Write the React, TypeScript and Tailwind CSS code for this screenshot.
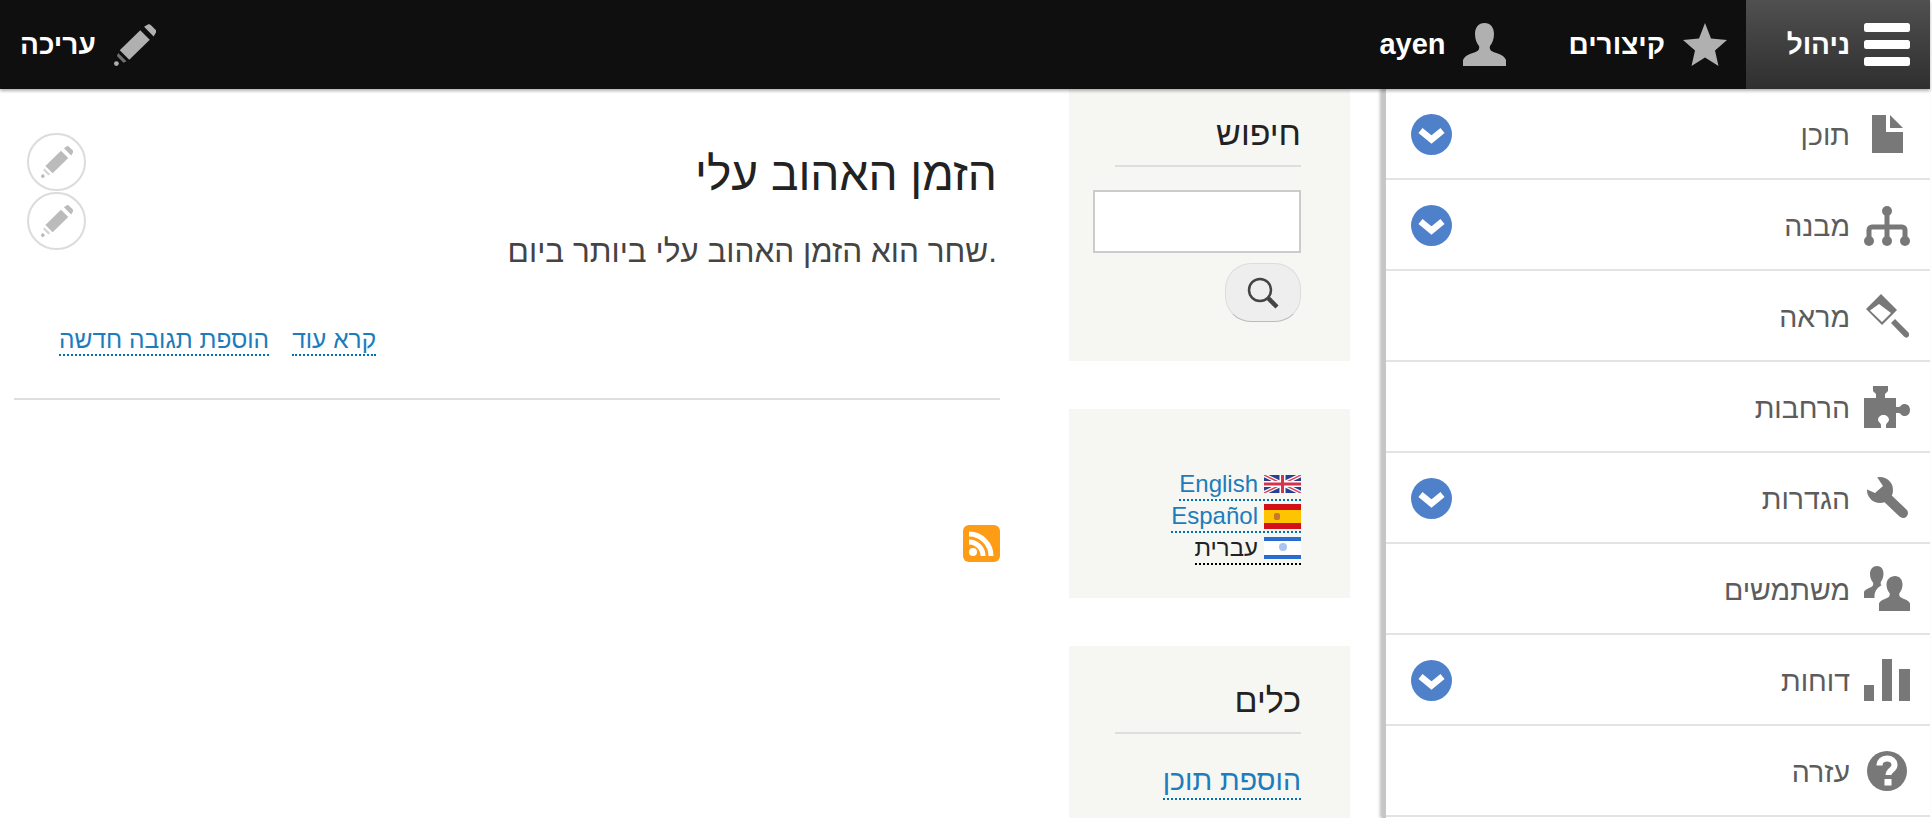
function PencilIcon({ className }: { className: string }) {
  return (
    <svg viewBox="0 0 44 44" className={className} fill="currentColor">
      <path d="M31.500 3l4-2.500c1-.5 2-.5 3 .5l5 5c1 1 1 2 .5 3l-2.500 4z" />
      <path d="M27.500 6.500l10 10-21.500 21-10-10z" />
      <path d="M4.500 30.500l8.500 8.500-3 1.500-7-7z" opacity="0.6" />
      <circle cx="2.500" cy="41.500" r="2.500" />
    </svg>
  )
}

function MenuIcon() {
  return (
    <svg viewBox="0 0 46 43" className="h-[43px] w-[46px] shrink-0" fill="#fff">
      <rect x="0" y="0" width="46" height="9" rx="2.500" />
      <rect x="0" y="17" width="46" height="9" rx="2.500" />
      <rect x="0" y="34" width="46" height="9" rx="2.500" />
    </svg>
  )
}

function StarIcon() {
  return (
    <svg viewBox="0 0 44 43" className="h-[43px] w-[44px] shrink-0" fill="#b0b0b0">
      <path d="M22 0l6 15.500L44 17 32 27.500 35.500 43 22 34.500 8.500 43 12 27.500 0 17l16-1.500z" />
    </svg>
  )
}

function UserIcon() {
  return (
    <svg viewBox="0 0 43 43" className="h-[43px] w-[43px] shrink-0" fill="#b0b0b0">
      <path d="M21.500 0c6 0 9.500 4.500 9.500 11 0 5-1.800 9.500-4 12-.8 2.500 0 4.500 3 5.800 4 1.700 11 3.200 13 8.200v6H0v-6c2-5 9-6.500 13-8.200 3-1.300 3.800-3.300 3-5.800-2.200-2.500-4-7-4-12C12 4.500 15.500 0 21.500 0z" />
    </svg>
  )
}

function FileIcon() {
  return (
    <svg viewBox="0 0 31 38" className="h-[38px] w-[31px]" fill="#787878">
      <path d="M0 0h14v17h17v21H0z" />
      <path d="M18 0l13 13H18z" />
    </svg>
  )
}

function TreeIcon() {
  return (
    <svg viewBox="0 0 46 40" className="mt-[3px] h-[40px] w-[46px]" fill="#787878" stroke="#787878">
      <circle cx="23" cy="5" r="5" stroke="none" />
      <circle cx="5" cy="35" r="5" stroke="none" />
      <circle cx="23" cy="35" r="5" stroke="none" />
      <circle cx="41" cy="35" r="5" stroke="none" />
      <path d="M23 8v26M5 34V24a3 3 0 0 1 3-3h30a3 3 0 0 1 3 3v10" fill="none" strokeWidth="5" />
    </svg>
  )
}

function BrushIcon() {
  return (
    <svg viewBox="0 0 43 44" className="h-[44px] w-[43px]" fill="#787878">
      <path fillRule="evenodd" d="M15 0l16 16-15 15L0 15zM4 16.500L16 28l9-9-12-9z" />
      <path d="M25 29l4-4 13 13c1.500 1.500 1.500 3 .5 4.500s-3 1.500-4.500 0z" />
    </svg>
  )
}

function PuzzleIcon() {
  return (
    <svg viewBox="0 0 46 42" className="h-[42px] w-[46px]" fill="#787878">
      <path d="M9 0h15v5l-3 3v4h11v9h3c2 0 2-3 5-3 3.500 0 6 2 6 6s-2.500 6-6 6c-3 0-3-3-5-3h-3v15H22v-3c0-2 3-3 3-5 0-3-2.500-5-5.500-5S14 31 14 34c0 2 3 3 3 5v3H0V12h12V8L9 5z" />
    </svg>
  )
}

function WrenchIcon() {
  return (
    <svg viewBox="0 0 43 42" className="h-[42px] w-[43px]">
      <circle cx="14" cy="13" r="13" fill="#787878" />
      <path d="M16 16l21 20" stroke="#787878" strokeWidth="10" strokeLinecap="round" />
      <path d="M0 0h11l6 9-8 7-9-4z" fill="#fff" />
    </svg>
  )
}

function PeopleIcon() {
  return (
    <svg viewBox="0 0 46 45" className="h-[45px] w-[46px]" fill="#787878">
      <path d="M13 0c4 0 6.500 3 6.500 7.500 0 3.500-1 6-2.500 8-.5 1.500-.5 3 .5 3.800-3.500 2-6 4.500-7 9.700v3H0v-6c1-3 5-3.500 8-5.500 1.200-1 1.500-2.500 1-4-1.800-2-3-5-3-8.500C6 3 9 0 13 0z" />
      <path d="M31 10c4.500 0 7.500 3.500 7.500 8.500 0 3.500-1.200 6.500-3 8.500-.6 1.800-.2 3.500 1.500 4.500 3 1.700 7.500 2.500 9 6V45H15v-7.500c1.500-3.500 6-4.300 9-6 1.700-1 2.100-2.700 1.500-4.500-1.800-2-3-5-3-8.500 0-5 4-8.500 8.500-8.500z" />
    </svg>
  )
}

function BarsIcon() {
  return (
    <svg viewBox="0 0 46 42" className="h-[42px] w-[46px]" fill="#787878">
      <rect x="0" y="26" width="10" height="16" />
      <rect x="18" y="0" width="10" height="42" />
      <rect x="35" y="10" width="11" height="32" />
    </svg>
  )
}

function HelpIcon() {
  return (
    <svg viewBox="0 0 40 42" className="h-[42px] w-[40px]">
      <circle cx="20" cy="21" r="20" fill="#787878" />
      <path d="M12.500 15.500c0-4 3-7 7.500-7s7.500 2.500 7.500 6.500c0 5-6 5-6 10" fill="none" stroke="#fff" strokeWidth="6" />
      <rect x="17.500" y="29" width="7" height="6.500" fill="#fff" />
    </svg>
  )
}

function Chevron() {
  return (
    <svg viewBox="0 0 41 41" className="mt-[2px] h-[41px] w-[41px]">
      <circle cx="20.500" cy="20.500" r="20.500" fill="#4e81c9" />
      <path d="M9.500 16.500l11 9 11-9" fill="none" stroke="#fff" strokeWidth="6.500" />
    </svg>
  )
}

function UkFlag() {
  return (
    <svg viewBox="0 0 37 18" className="h-[18px] w-[37px]">
      <rect width="37" height="18" fill="#2b3f8f" />
      <path d="M0 0l37 18M37 0L0 18" stroke="#fff" strokeWidth="4" />
      <path d="M0 0l37 18M37 0L0 18" stroke="#d8435a" strokeWidth="1.500" />
      <path d="M18.500 0v18M0 9h37" stroke="#fff" strokeWidth="6" />
      <path d="M18.500 0v18M0 9h37" stroke="#d8324a" strokeWidth="3" />
    </svg>
  )
}

function EsFlag() {
  return (
    <svg viewBox="0 0 37 25" className="h-[25px] w-[37px]">
      <rect width="37" height="25" fill="#d3101a" />
      <rect y="6" width="37" height="13" fill="#ffc400" />
      <rect x="10" y="9" width="6" height="7" rx="2" fill="#c8782a" />
    </svg>
  )
}

function IlFlag() {
  return (
    <svg viewBox="0 0 37 22" className="h-[22px] w-[37px]">
      <rect width="37" height="22" fill="#fff" />
      <rect width="37" height="4" fill="#2b6cd0" />
      <rect y="18" width="37" height="4" fill="#2b6cd0" />
      <circle cx="19" cy="10" r="4" fill="#a9c4ee" />
    </svg>
  )
}

const trayItems = [
  { icon: <FileIcon />, label: 'תוכן', more: true },
  { icon: <TreeIcon />, label: 'מבנה', more: true },
  { icon: <BrushIcon />, label: 'מראה', more: false },
  { icon: <PuzzleIcon />, label: 'הרחבות', more: false },
  { icon: <WrenchIcon />, label: 'הגדרות', more: true },
  { icon: <PeopleIcon />, label: 'משתמשים', more: false },
  { icon: <BarsIcon />, label: 'דוחות', more: true },
  { icon: <HelpIcon />, label: 'עזרה', more: false },
]

function SidebarTitle({ children }: { children: string }) {
  return (
    <h2 className="w-[186px] border-b-2 border-[#dedede] pb-[10px] text-[34px] leading-[44px] text-[#222]">
      {children}
    </h2>
  )
}

export default function App() {
  return (
    <div dir="rtl" className="flex h-[818px] w-[1932px] flex-col overflow-hidden bg-white pr-[2px] font-['Liberation_Sans',sans-serif]">
      {/* Top toolbar */}
      <div className="z-20 flex h-[89px] shrink-0 items-center bg-[#0f0f0f] text-[28px] font-bold text-white shadow-[0_2px_3px_rgba(0,0,0,0.3)]">
        <div className="flex h-full w-[184px] items-center gap-[14px] bg-gradient-to-b from-[#505050] to-[#2f2f2f] pr-[20px]">
          <MenuIcon />
          <span>ניהול</span>
        </div>
        <div className="flex h-full items-center gap-[18px] pr-[19px] pl-[44px]">
          <StarIcon />
          <span>קיצורים</span>
        </div>
        <div className="flex h-full items-center gap-[17px] pr-[19px]">
          <UserIcon />
          <span className="text-[29px]">ayen</span>
        </div>
        <div className="mr-auto flex items-center gap-[18px] pl-[20px]">
          <PencilIcon className="h-[42px] w-[42px] text-[#b0b0b0]" />
          <span>עריכה</span>
        </div>
      </div>

      <div className="flex min-h-0 flex-1">
        {/* Admin tray */}
        <div className="z-10 w-[548px] shrink-0 border-l-[4px] border-[#c6c6c6] bg-white text-[28.500px] text-[#5c5c5c] shadow-[-2px_0_3px_rgba(0,0,0,0.25)]">
          {trayItems.map((item) => (
            <div key={item.label} className="flex h-[91px] items-center gap-[14px] border-b-2 border-[#e3e3e3] pr-[20px] pl-[25px]">
              <div className="flex w-[46px] justify-center">{item.icon}</div>
              <span className="flex-1 pt-[3px]">{item.label}</span>
              {item.more && <Chevron />}
            </div>
          ))}
        </div>

        {/* Sidebar blocks */}
        <div className="mr-[32px] ml-[69px] flex w-[281px] shrink-0 flex-col gap-[48px]">
          <div className="h-[272px] bg-[#f6f6f2] pt-[22px] pr-[49px] pl-[24px]">
            <SidebarTitle>חיפוש</SidebarTitle>
            <input className="mt-[23px] block h-[63px] w-[208px] border-2 border-[#ccc] bg-white" />
            <button className="mt-[10px] flex h-[59px] w-[76px] items-center justify-center rounded-[26px] border border-[#ddd] border-b-[#bbb] bg-[#eee]">
              <svg viewBox="0 0 32 32" className="h-[32px] w-[32px]" fill="none" stroke="#444">
                <circle cx="13" cy="13" r="11" strokeWidth="2.500" />
                <path d="M21 21l9 9" strokeWidth="4.500" />
              </svg>
            </button>
          </div>

          <div className="flex h-[189px] flex-col items-start bg-[#f6f6f2] pt-[60px] pr-[49px] text-[24px] leading-[32px]">
            <a className="flex h-[32px] items-center gap-[6px] border-b-2 border-dotted border-[#0071b3] text-[#1c7cbc]">
              <UkFlag />
              <span>English</span>
            </a>
            <a className="flex h-[32px] items-center gap-[6px] border-b-2 border-dotted border-[#0071b3] text-[#1c7cbc]">
              <EsFlag />
              <span>Español</span>
            </a>
            <a className="flex h-[32px] items-center gap-[6px] border-b-2 border-dotted border-black text-[#222]">
              <IlFlag />
              <span>עברית</span>
            </a>
          </div>

          <div className="flex-1 bg-[#f6f6f2] pt-[32px] pr-[49px] pl-[24px]">
            <SidebarTitle>כלים</SidebarTitle>
            <a className="mt-[28px] inline-block border-b-2 border-dotted border-[#0071b3] text-[28.500px] leading-[36px] text-[#1c7cbc]">
              הוספת תוכן
            </a>
          </div>
        </div>

        {/* Main content */}
        <div className="relative w-[986px] shrink-0">
          <h1 className="pt-[57px] pr-[3px] text-[46px] leading-[56px] font-normal text-[#222]">הזמן האהוב עלי</h1>
          <p dir="ltr" className="mt-[29px] pr-[3px] text-right text-[31.500px] leading-[40px] text-[#444]">
            שחר הוא הזמן האהוב עלי ביותר ביום.
          </p>
          <div className="mt-[53px] flex justify-end gap-[23px] pl-[45px] text-[24.500px] leading-[30px]">
            <a className="border-b-2 border-dotted border-[#0071b3] pt-[2px] leading-[28px] text-[#1c7cbc]">קרא עוד</a>
            <a className="border-b-2 border-dotted border-[#0071b3] pt-[2px] leading-[28px] text-[#1c7cbc]">הוספת תגובה חדשה</a>
          </div>
          <div className="mt-[42px] border-b-2 border-[#dedede]" />
          <svg viewBox="0 0 37 37" className="mt-[125px] h-[37px] w-[37px]">
            <rect width="37" height="37" rx="6" fill="#ff9c15" />
            <circle cx="10" cy="27" r="4" fill="#fff" />
            <path d="M6 17a14 14 0 0 1 14 14M6 9a22 22 0 0 1 22 22" fill="none" stroke="#fff" strokeWidth="5" />
          </svg>

          {/* Contextual edit buttons */}
          <div className="absolute top-[44px] left-[13px] flex flex-col gap-[1px]">
            <div className="flex h-[58px] w-[59px] items-center justify-center rounded-full border-2 border-[#dcdcdc] bg-white">
              <PencilIcon className="h-[32px] w-[32px] text-[#bbb]" />
            </div>
            <div className="flex h-[58px] w-[59px] items-center justify-center rounded-full border-2 border-[#dcdcdc] bg-white">
              <PencilIcon className="h-[32px] w-[32px] text-[#bbb]" />
            </div>
          </div>
        </div>
      </div>
    </div>
  )
}
